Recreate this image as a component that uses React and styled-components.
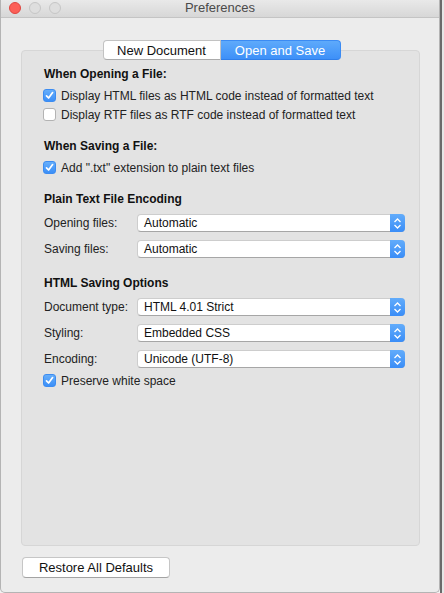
import React from "react";
import styled, { createGlobalStyle } from "styled-components";

const GlobalStyle = createGlobalStyle`
  html, body {
    margin: 0;
    padding: 0;
    background: #f2f2f2;
  }
  body {
    font-family: "Liberation Sans", Arial, sans-serif;
    color: #222;
  }
`;

const sections = [
  {
    title: "When Opening a File:",
    checks: [
      { label: "Display HTML files as HTML code instead of formatted text", on: true },
      { label: "Display RTF files as RTF code instead of formatted text", on: false },
    ],
  },
  {
    title: "When Saving a File:",
    checks: [{ label: 'Add ".txt" extension to plain text files', on: true }],
  },
  {
    title: "Plain Text File Encoding",
    fields: [
      { label: "Opening files:", value: "Automatic" },
      { label: "Saving files:", value: "Automatic" },
    ],
  },
  {
    title: "HTML Saving Options",
    fields: [
      { label: "Document type:", value: "HTML 4.01 Strict" },
      { label: "Styling:", value: "Embedded CSS" },
      { label: "Encoding:", value: "Unicode (UTF-8)" },
    ],
    after: [{ label: "Preserve white space", on: true }],
  },
];

function CheckMark() {
  return (
    <svg width="9" height="9" viewBox="0 0 9 9">
      <path d="M1.5 4.8 L3.6 7 L7.6 1.6" fill="none" stroke="#fff" strokeWidth="1.7" strokeLinecap="round" strokeLinejoin="round" />
    </svg>
  );
}

function Chevrons() {
  return (
    <svg width="9" height="13" viewBox="0 0 9 13">
      <path d="M1.5 5 L4.5 2 L7.5 5" fill="none" stroke="#fff" strokeWidth="1.3" />
      <path d="M1.5 8 L4.5 11 L7.5 8" fill="none" stroke="#fff" strokeWidth="1.3" />
    </svg>
  );
}

function Check({ label, on }) {
  return (
    <CheckRow>
      <Box $on={on}>{on && <CheckMark />}</Box>
      <span>{label}</span>
    </CheckRow>
  );
}

export default function App() {
  return (
    <>
      <GlobalStyle />
      <Page>
        <Window>
          <TitleBar>
            <Lights>
              <Light $color="#fc5f57" $edge="#de4640" />
              <Light $color="#dedede" $edge="#c6c6c6" />
              <Light $color="#dedede" $edge="#c6c6c6" />
            </Lights>
            <Title>Preferences</Title>
          </TitleBar>

          <Body>
            <Tabs>
              <Tab $w={118}>New Document</Tab>
              <Tab $w={120} $active>Open and Save</Tab>
            </Tabs>

            <Panel>
              {sections.map((s) => (
                <Section key={s.title}>
                  <Heading>{s.title}</Heading>
                  {s.checks && s.checks.map((c) => <Check key={c.label} {...c} />)}
                  {s.fields && (
                    <Fields>
                      {s.fields.map((f) => (
                        <FieldRow key={f.label}>
                          <FieldLabel>{f.label}</FieldLabel>
                          <Popup>
                            <PopupValue>{f.value}</PopupValue>
                            <PopupArrow>
                              <Chevrons />
                            </PopupArrow>
                          </Popup>
                        </FieldRow>
                      ))}
                    </Fields>
                  )}
                  {s.after && s.after.map((c) => <Check key={c.label} {...c} />)}
                </Section>
              ))}
            </Panel>

            <Footer>
              <PushButton>Restore All Defaults</PushButton>
            </Footer>
          </Body>
        </Window>
        <Edge />
      </Page>
    </>
  );
}

const Page = styled.div`
  display: flex;
  width: 444px;
  height: 593px;
  overflow: hidden;
`;

const Window = styled.div`
  display: flex;
  flex-direction: column;
  width: 440px;
  height: 593px;
  box-sizing: border-box;
  background: #ececec;
  border: 1px solid #b4b4b4;
  border-top: none;
  border-radius: 0 0 5px 5px;
  overflow: hidden;
`;

const Edge = styled.div`
  flex: 1;
  border-left: 2px solid #6a6a6a;
  background: #e6e6e6;
`;

const TitleBar = styled.div`
  display: grid;
  grid-template-columns: 1fr auto 1fr;
  align-items: center;
  height: 18px;
  box-sizing: border-box;
  padding-bottom: 2px;
  background: linear-gradient(#e9e9e9, #d7d7d7);
  border-bottom: 1px solid #c4c4c4;
`;

const Lights = styled.div`
  display: flex;
  gap: 8px;
  padding-left: 8px;
`;

const Light = styled.span`
  width: 12px;
  height: 12px;
  box-sizing: border-box;
  border-radius: 50%;
  background: ${(p) => p.$color};
  border: 1px solid ${(p) => p.$edge};
`;

const Title = styled.div`
  font-size: 13px;
  color: #4a4a4a;
`;

const Body = styled.div`
  flex: 1;
  display: flex;
  flex-direction: column;
  padding: 22px 19px 14px 20px;
`;

const Tabs = styled.div`
  position: relative;
  z-index: 1;
  display: flex;
  align-self: center;
  margin-bottom: -10px;
  margin-left: 2px;
`;

const Tab = styled.div`
  width: ${(p) => p.$w}px;
  height: 20px;
  box-sizing: border-box;
  display: flex;
  align-items: center;
  justify-content: center;
  font-size: 13px;
  color: ${(p) => (p.$active ? "#fff" : "#111")};
  background: ${(p) => (p.$active ? "linear-gradient(#5eaafb, #3d90f8)" : "#fff")};
  border: 1px solid ${(p) => (p.$active ? "#3b8bf3" : "#c2c2c2")};
  border-bottom-color: ${(p) => (p.$active ? "#2f7ee9" : "#ababab")};
  border-radius: ${(p) => (p.$active ? "0 4px 4px 0" : "4px 0 0 4px")};
  border-left-width: ${(p) => (p.$active ? "0" : "1px")};
`;

const Panel = styled.div`
  flex: 1;
  background: #e3e3e3;
  border: 1px solid #d6d6d6;
  border-radius: 4px;
  padding: 15px 14px 0 21px;
  display: flex;
  flex-direction: column;
  gap: 14px;
`;

const Section = styled.div`
  display: flex;
  flex-direction: column;
`;

const Heading = styled.div`
  font-size: 12px;
  font-weight: bold;
  line-height: 16px;
  color: #111;
  margin: 0 0 4px 1px;
`;

const CheckRow = styled.div`
  display: flex;
  align-items: center;
  gap: 5px;
  height: 19px;
  font-size: 12px;
  color: #222;
`;

const Box = styled.span`
  width: 13px;
  height: 13px;
  box-sizing: border-box;
  border-radius: 3px;
  display: flex;
  align-items: center;
  justify-content: center;
  background: ${(p) => (p.$on ? "linear-gradient(#66aefa, #3b8ff8)" : "#fff")};
  border: 1px solid ${(p) => (p.$on ? "#3c8cf1" : "#b3b3b3")};
`;

const Fields = styled.div`
  display: flex;
  flex-direction: column;
  gap: 4px;
  padding: 1px 0 1px;
`;

const FieldRow = styled.div`
  display: flex;
  align-items: center;
  height: 22px;
`;

const FieldLabel = styled.div`
  width: 94px;
  padding-left: 1px;
  box-sizing: border-box;
  font-size: 12px;
  color: #222;
`;

const Popup = styled.div`
  flex: 1;
  display: flex;
  height: 18px;
  box-sizing: border-box;
  background: #fff;
  border: 1px solid #cdcdcd;
  border-bottom-color: #a6a6a6;
  border-radius: 4px;
`;

const PopupValue = styled.div`
  flex: 1;
  display: flex;
  align-items: center;
  padding-left: 6px;
  font-size: 12px;
  color: #111;
`;

const PopupArrow = styled.div`
  width: 15px;
  margin: -1px -1px -1px 0;
  display: flex;
  align-items: center;
  justify-content: center;
  background: linear-gradient(#62acfb, #3a8df7);
  border-radius: 0 4px 4px 0;
`;

const Footer = styled.div`
  display: flex;
  padding-top: 11px;
`;

const PushButton = styled.div`
  width: 148px;
  height: 21px;
  margin-left: 1px;
  box-sizing: border-box;
  display: flex;
  align-items: center;
  justify-content: center;
  font-size: 13px;
  color: #111;
  background: #fff;
  border: 1px solid #c6c6c6;
  border-bottom-color: #a3a3a3;
  border-radius: 4px;
`;
